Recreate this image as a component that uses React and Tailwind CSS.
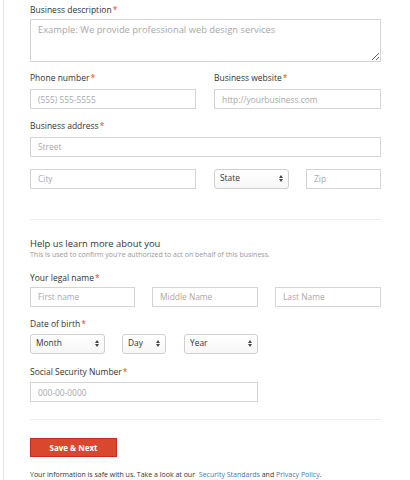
import React from "react";

const font = { fontFamily: '"Open Sans", "Liberation Sans", sans-serif' };

function Label({ children, required = true, className = "" }) {
  return (
    <div className={`h-[12px] leading-[12px] text-[8.5px] text-[#333] ${className}`}>
      {children}
      {required && <span className="text-[#d9472f] ml-[1px]">*</span>}
    </div>
  );
}

function TextInput({ placeholder, className = "" }) {
  return (
    <input
      type="text"
      placeholder={placeholder}
      className={`h-[20px] border border-[#d4d4d4] bg-white px-[7px] text-[8.4px] text-[#333] placeholder:text-[#a8a8a8] outline-none ${className}`}
      style={font}
    />
  );
}

function Arrows() {
  return (
    <svg width="4" height="7" viewBox="0 0 4 7" className="shrink-0">
      <path d="M0 3 L2 0 L4 3 Z" fill="#444" />
      <path d="M0 4 L2 7 L4 4 Z" fill="#444" />
    </svg>
  );
}

function Select({ label, className = "" }) {
  return (
    <div
      className={`h-[20px] flex items-center justify-between rounded-[3px] border border-[#cfcfcf] bg-gradient-to-b from-white to-[#f7f7f7] pl-[5px] pr-[5px] text-[8.4px] text-[#333] ${className}`}
    >
      <span>{label}</span>
      <Arrows />
    </div>
  );
}

export default function App() {
  return (
    <div className="min-h-[480px] bg-white" style={font}>
      <div className="ml-[3px] min-h-[480px] border-l border-[#e6e6e6] pl-[26px] w-[379px]">
        <div className="pt-[4px]">
          <Label>Business description</Label>
          <textarea
            placeholder="Example: We provide professional web design services"
            className="mt-[3px] block h-[43px] w-[351px] border border-[#d4d4d4] px-[7px] py-[3px] text-[9.4px] leading-[13px] placeholder:text-[#a8a8a8] outline-none"
            style={font}
          />
        </div>

        <div className="mt-[10px] flex gap-[18px]">
          <div className="w-[166px]">
            <Label>Phone number</Label>
            <TextInput placeholder="(555) 555-5555" className="mt-[5px] w-[166px]" />
          </div>
          <div className="w-[167px]">
            <Label>Business website</Label>
            <TextInput placeholder="http://yourbusiness.com" className="mt-[5px] w-[167px]" />
          </div>
        </div>

        <div className="mt-[11px]">
          <Label>Business address</Label>
          <TextInput placeholder="Street" className="mt-[3px] w-[351px]" />
          <div className="mt-[12px] flex">
            <TextInput placeholder="City" className="w-[166px]" />
            <Select label="State" className="ml-[18px] w-[75px]" />
            <TextInput placeholder="Zip" className="ml-[17px] w-[75px]" />
          </div>
        </div>

        <div className="mt-[30px] w-[351px] border-t border-[#ececec]" />

        <div className="mt-[18px]">
          <div className="h-[12px] leading-[12px] text-[9.4px] text-[#333]">
            Help us learn more about you
          </div>
          <div className="h-[9px] leading-[9px] text-[7px] text-[#999]">
            This is used to confirm you're authorized to act on behalf of this business.
          </div>
        </div>

        <div className="mt-[13px]">
          <Label>Your legal name</Label>
          <div className="mt-[3px] flex">
            <TextInput placeholder="First name" className="w-[105px]" />
            <TextInput placeholder="Middle Name" className="ml-[17px] w-[106px]" />
            <TextInput placeholder="Last Name" className="ml-[17px] w-[106px]" />
          </div>
        </div>

        <div className="mt-[11px]">
          <Label>Date of birth</Label>
          <div className="mt-[4px] flex">
            <Select label="Month" className="w-[75px]" />
            <Select label="Day" className="ml-[17px] w-[44px]" />
            <Select label="Year" className="ml-[18px] w-[74px]" />
          </div>
        </div>

        <div className="mt-[12px]">
          <Label>Social Security Number</Label>
          <TextInput placeholder="000-00-0000" className="mt-[4px] w-[228px]" />
        </div>

        <div className="mt-[17px] w-[351px] border-t border-[#ececec]" />

        <button
          className="mt-[18px] flex h-[19px] w-[87px] items-center justify-center border border-[#c92a1e] bg-[#d9472f] text-[8px] font-bold text-white"
          style={font}
        >
          Save &amp; Next
        </button>

        <div className="mt-[13px] h-[9px] leading-[9px] text-[7px] text-[#333] whitespace-nowrap">
          Your information is safe with us. Take a look at our{" "}
          <span className="ml-[2px] text-[#3f76b9]">Security Standards</span> and{" "}
          <span className="text-[#3f76b9]">Privacy Policy</span>.
        </div>
      </div>
    </div>
  );
}
